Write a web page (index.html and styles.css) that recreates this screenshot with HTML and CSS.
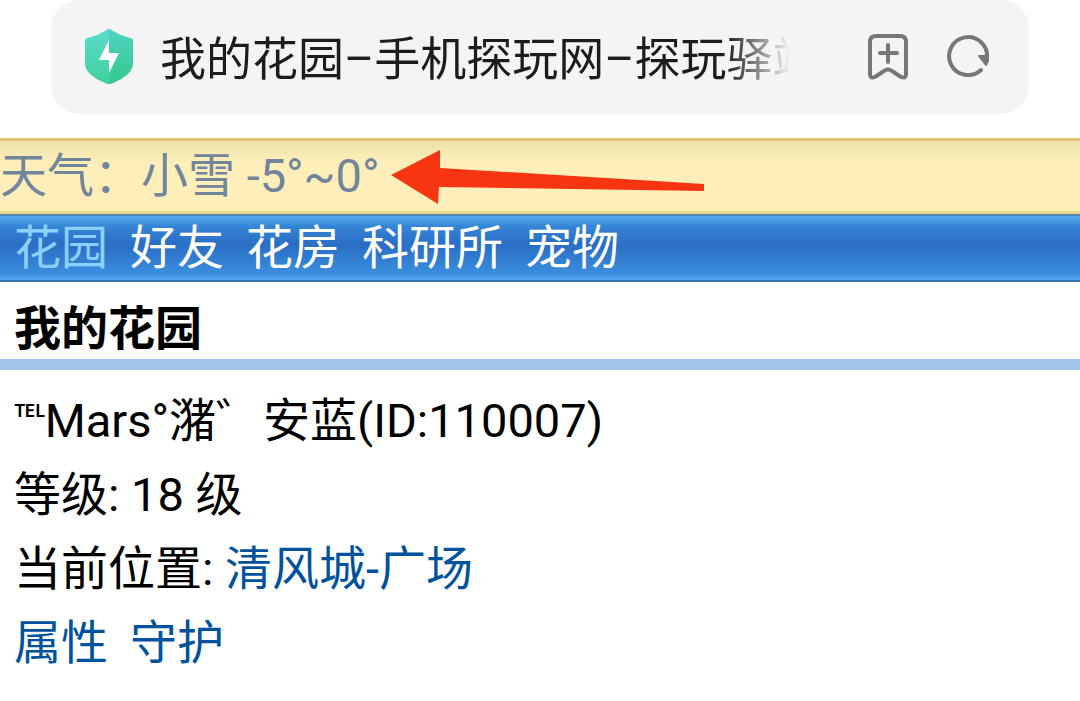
FILE: index.html
```html
<!DOCTYPE html>
<html lang="zh-CN">
<head>
	<meta charset="utf-8">
	<meta name="viewport" content="width=device-width, initial-scale=1">
	<title>我的花园-手机探玩网-探玩驿站</title>
	<link rel="stylesheet" href="styles.css">
</head>
<body>
	<header class="browser">
		<div class="address">
			<svg class="shield" viewBox="0 0 50 56" aria-hidden="true">
				<defs>
					<linearGradient id="left" x1="0" y1="0" x2="0" y2="1">
						<stop offset="0" stop-color="#5cdccf"/>
						<stop offset="1" stop-color="#3fd09a"/>
					</linearGradient>
					<linearGradient id="right" x1="0" y1="0" x2="0" y2="1">
						<stop offset="0" stop-color="#4fd3c4"/>
						<stop offset="1" stop-color="#33c88c"/>
					</linearGradient>
				</defs>
				<path fill="url(#left)" d="M25 0q-2 0-4 2Q13 7 4 9 1 9 1 12v23c0 8 10 15 20 19q2 1 4 1z"/>
				<path fill="url(#right)" d="M25 0q2 0 4 2 8 5 17 7 3 0 3 3v23c0 8-10 15-20 19q-2 1-4 1z"/>
				<path fill="#fff" d="M25 11 15 31h10v13l10-20H25z"/>
			</svg>
			<div class="page-title">我的花园–手机探玩网–探玩驿站</div>
			<button class="tool" type="button" aria-label="添加书签">
				<svg viewBox="0 0 44 48" fill="none" stroke="#777" stroke-width="4" stroke-linejoin="round" stroke-linecap="round">
					<path d="M10 3h24q6 0 6 6v32q0 5-5 3l-9-6q-4-3-8 0l-9 6q-5 2-5-3V9q0-6 6-6zM22 12v17M14 20h17"/>
				</svg>
			</button>
			<button class="tool" type="button" aria-label="刷新">
				<svg viewBox="0 0 44 48" fill="none" stroke="#777" stroke-width="4" stroke-linecap="round">
					<path d="M35 37A19 19 0 1 1 41 25"/>
					<path fill="#777" stroke-width="2" stroke-linejoin="round" d="M33 23h9v5l-2 4z"/>
				</svg>
			</button>
		</div>
	</header>
	<div class="weather">
		<span>天气：小雪 -5°~0°</span>
		<svg class="arrow" viewBox="0 0 314 56" aria-hidden="true">
			<path fill="#f73510" d="M0 27 49 2v18l264 16v7L48 39l-1 17z"/>
		</svg>
	</div>
	<nav class="menu">
		<a class="current" href="#garden">花园</a>
		<a href="#friends">好友</a>
		<a href="#house">花房</a>
		<a href="#lab">科研所</a>
		<a href="#pets">宠物</a>
	</nav>
	<main id="garden">
		<h1>我的花园</h1>
		<div class="info">
			<p><span class="symbol">℡</span>Mars°潴゛安蓝(ID:110007)</p>
			<p>等级: 18 级</p>
			<p>当前位置: <a href="#square">清风城-广场</a></p>
			<p class="links"><a href="#attributes">属性</a><a href="#guard">守护</a></p>
		</div>
	</main>
</body>
</html>
```

FILE: styles.css
```css
body {
	margin: 0;
	background: #fff;
	color: #000;
	font-family: Roboto, "Noto Sans CJK SC", sans-serif;
	font-size: 47px;
	line-height: 74px;
}
a {
	color: #00529c;
	text-decoration: none;
}
.browser {
	padding: 0 51px 24px;
}
.address {
	display: flex;
	align-items: center;
	height: 114px;
	padding: 0 39px 0 33px;
	border-radius: 28px;
	background: #f4f4f4;
}
.shield {
	flex: none;
	width: 50px;
	height: 56px;
	margin-right: 26px;
}
.page-title {
	flex: 1;
	overflow: hidden;
	margin-right: 76px;
	padding-top: 4px;
	color: #1c1c1c;
	font-size: 46px;
	white-space: nowrap;
	-webkit-mask-image: linear-gradient(to left, transparent, #000 64px);
	mask-image: linear-gradient(to left, transparent, #000 64px);
}
.tool {
	flex: none;
	width: 44px;
	height: 48px;
	padding: 0;
	border: none;
	background: none;
}
.tool + .tool {
	margin-left: 36px;
}
.tool svg {
	display: block;
}
.weather {
	display: flex;
	align-items: center;
	gap: 11px;
	border-top: 3px solid #e0c277;
	border-bottom: 3px solid #ecd68c;
	background: linear-gradient(#ece0ab, #feefba 30%, #feefba);
	color: #73859a;
	line-height: 70px;
}
.arrow {
	width: 314px;
	height: 56px;
}
.menu {
	display: flex;
	gap: 22px;
	padding: 0 14px;
	border-top: 2px solid #4b87b0;
	border-bottom: 2px solid #3a75b0;
	background: linear-gradient(#56a9f0, #3585d6 16%, #2a6dc5 45%, #3a8edd 90%, #56aaf0);
	line-height: 64px;
}
.menu a {
	color: #fff;
}
.menu .current {
	color: #8cd0ff;
}
h1 {
	margin: 0;
	padding: 16px 14px 0;
	border-bottom: 11px solid #a0c4ea;
	font-size: 47px;
	line-height: 61px;
}
.info {
	padding: 14px;
}
.info p {
	margin: 0;
}
.symbol {
	font-family: "Noto Sans", "DejaVu Sans", sans-serif;
	font-size: 38px;
	line-height: 1;
	vertical-align: 6px;
}
.links {
	display: flex;
	gap: 22px;
}
```
